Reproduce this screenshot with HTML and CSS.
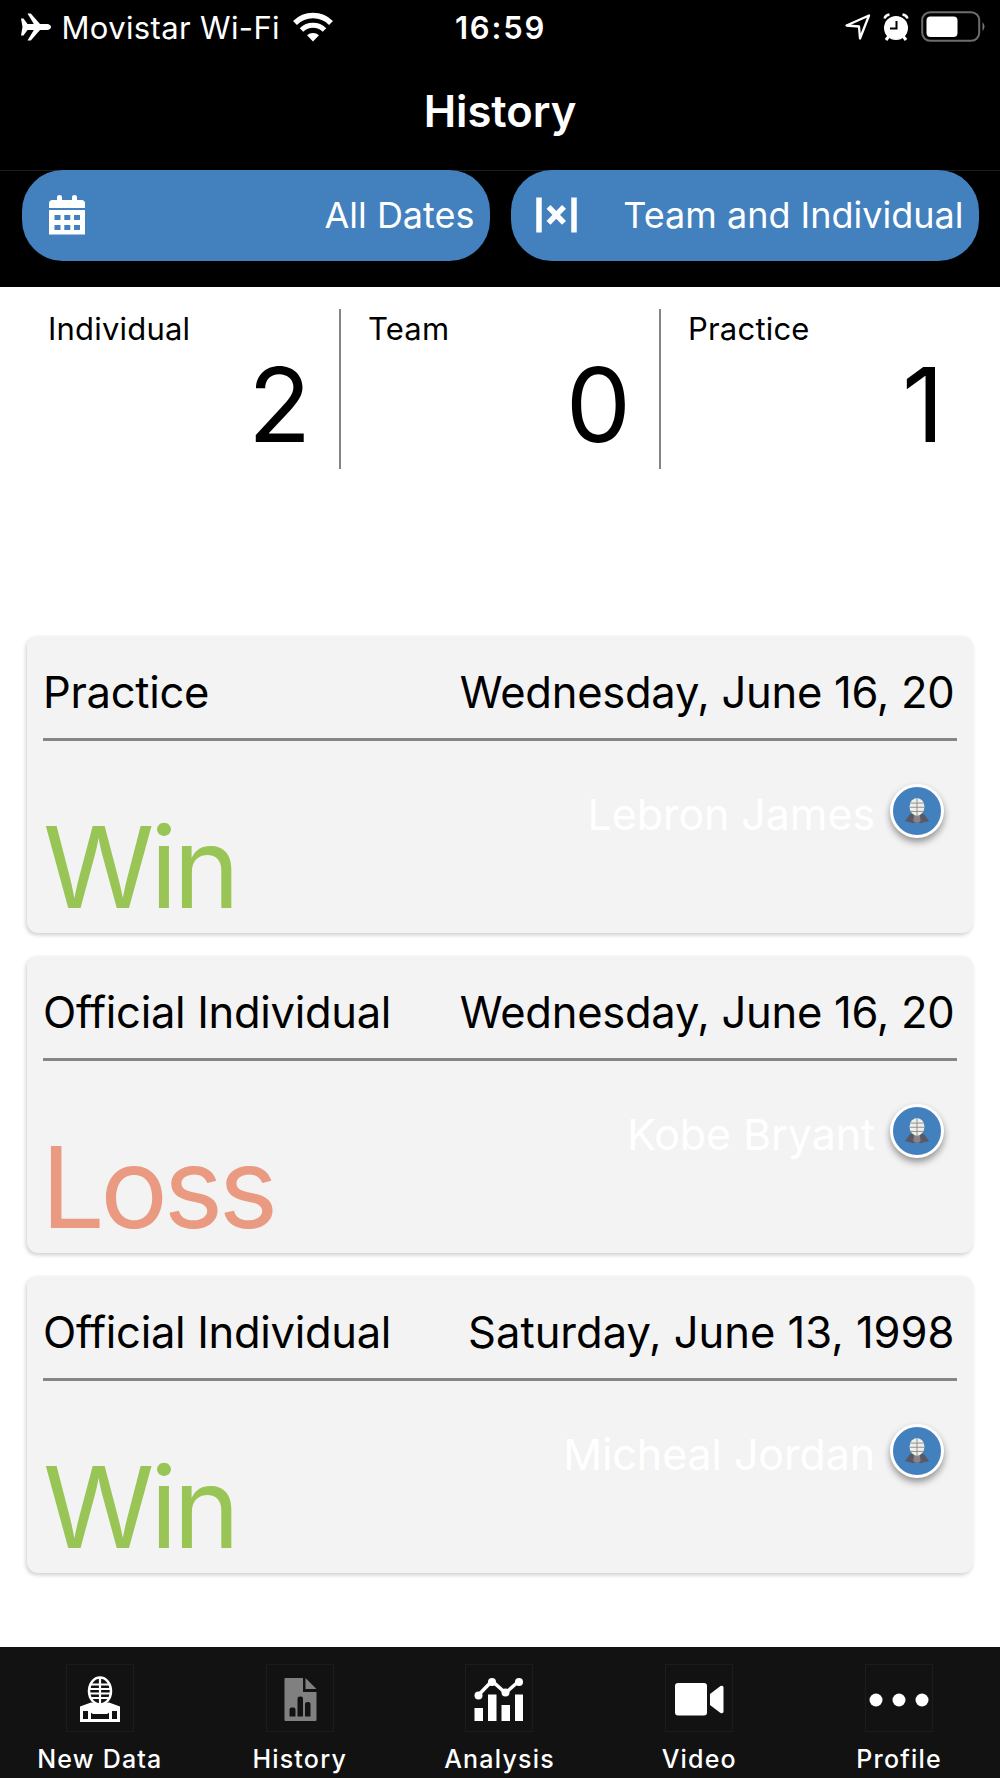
FILE: index.html
```html
<!DOCTYPE html>
<html lang="en">
<head>
<meta charset="utf-8">
<title>History</title>
<link rel="stylesheet" href="styles.css">
</head>
<body>
<svg width="0" height="0" class="defs" aria-hidden="true">
  <symbol id="fencer" viewBox="0 0 30 30">
    <path d="M7 19 11 17h8l4 2 5 7-6 1-2 1-5-1-5 1-2-1-6-1z" fill="#5b5763"/>
    <path d="M12 19h6l1 7-4 2-4-2z" fill="#8a8189"/>
    <ellipse cx="15" cy="10.500" rx="8" ry="9.500" fill="#eeeeea"/>
    <path d="M15 1v20M8 6.500h14M7 11h16M8 15.500h14" stroke="#8b8b8b" stroke-width="1" fill="none"/>
  </symbol>
</svg>
<header class="header">
  <div class="status">
    <div class="status-left">
      <svg class="plane" width="30" height="28" viewBox="0 0 30 28"><path d="M0 5.500h2.500l4 5.500h6.300L6.500.5h3.300L19 11h7.200c2 0 3.800 1.400 3.800 3s-1.800 3-3.800 3H19L9.800 27.500H6.500L12.800 17H6.500l-4 5.500H0L1.500 14z" fill="#fff"/></svg>
      <span class="carrier">Movistar Wi-Fi</span>
      <svg class="wifi" width="40" height="30" viewBox="0 0 40 30" fill="none" stroke="#fff"><path d="M2 11a25.500 25.500 0 0 1 36 0" stroke-width="5.500"/><path d="M8.500 18a16.500 16.500 0 0 1 23 0" stroke-width="5"/><path d="M20 29.500 14 23.300a8.800 8.800 0 0 1 12 0z" fill="#fff" stroke="none"/></svg>
    </div>
    <span class="clock">16:59</span>
    <div class="status-right">
      <svg width="26" height="26" viewBox="0 0 26 26"><path d="M1.500 11.500 24 1.500 15 24.500 14 12.500z" fill="none" stroke="#fff" stroke-width="2.300" stroke-linejoin="round"/></svg>
      <svg class="alarm" width="26" height="28" viewBox="0 0 26 28"><circle cx="13" cy="15" r="12" fill="#fff"/><path d="m6 23-3 4M20 23l3 4" stroke="#fff" stroke-width="3"/><path d="M1.500 5.500Q2.500 2 6.500 1.500M24.500 5.500Q23.500 2 19.500 1.500" stroke="#fff" stroke-width="2.500" fill="none"/><path d="M13.500 8v7.500H7" stroke="#000" stroke-width="2" fill="none"/></svg>
      <svg class="battery" width="65" height="32" viewBox="0 0 65 32"><rect x="1.200" y="1.200" width="57" height="28.600" rx="8" fill="none" stroke="#6d6d6d" stroke-width="2"/><rect x="5.500" y="5.500" width="31" height="20.500" rx="4" fill="#fff"/><path d="M61.500 11q4 4.500 0 9z" fill="#777"/></svg>
    </div>
  </div>
  <h1 class="title">History</h1>
  <div class="filters">
    <button class="pill">
      <svg class="cal" width="36" height="40" viewBox="0 0 36 40"><path d="M0 13V8.500Q0 5 3.500 5H8V2q0-2 2.500-2T13 2v3h10V2q0-2 2.500-2T28 2v3h4.500Q36 5 36 8.500V13zM0 15h36v24.500H0z" fill="#fff"/><path d="M5.500 20h6v5h-6zM15.300 20h6v5h-6zM25 20h6v5h-6zM5.500 30h6v5h-6zM15.300 30h6v5h-6zM25 30h6v5h-6z" fill="#4280be"/></svg>
      <span>All Dates</span>
    </button>
    <button class="pill">
      <svg class="vs" width="42" height="36" viewBox="0 0 42 36" fill="none" stroke="#fff"><path d="M3 .5v35M38 .5v35" stroke-width="5.500"/><path d="m12.500 9.800 15.500 16M28 9.800l-15.500 16" stroke-width="5.500"/></svg>
      <span>Team and Individual</span>
    </button>
  </div>
</header>
<main>
  <section class="stats">
    <div class="stat"><span class="label">Individual</span><span class="num">2</span></div>
    <div class="stat"><span class="label">Team</span><span class="num">0</span></div>
    <div class="stat"><span class="label">Practice</span><span class="num">1</span></div>
  </section>
  <section class="list">
    <article class="card">
      <div class="card-head"><span class="kind">Practice</span><span class="date">Wednesday, June 16, 20</span></div>
      <div class="card-body"><span class="result win">Win</span><div class="who"><span>Lebron James</span><i class="avatar"><svg width="28" height="28"><use href="#fencer"/></svg></i></div></div>
    </article>
    <article class="card">
      <div class="card-head"><span class="kind">Official Individual</span><span class="date">Wednesday, June 16, 20</span></div>
      <div class="card-body"><span class="result loss">Loss</span><div class="who"><span>Kobe Bryant</span><i class="avatar"><svg width="28" height="28"><use href="#fencer"/></svg></i></div></div>
    </article>
    <article class="card">
      <div class="card-head"><span class="kind">Official Individual</span><span class="date full">Saturday, June 13, 1998</span></div>
      <div class="card-body"><span class="result win">Win</span><div class="who"><span>Micheal Jordan</span><i class="avatar"><svg width="28" height="28"><use href="#fencer"/></svg></i></div></div>
    </article>
  </section>
</main>
<nav class="tabs">
  <a class="tab"><span class="ico"><svg width="66" height="66" viewBox="0 0 66 66" fill="none" stroke="#fff"><ellipse cx="33" cy="26" rx="11" ry="13.500" stroke-width="2.500"/><path d="M33 12v27M24 19.500h18M22 24h22M23 28.500h20M25 33h16" stroke-width="2.200"/><path d="m13 41.500 11-4q9 2.500 18 0l11 4v4.500h-8.500l-4.500 3H26l-4.500-3H13z" fill="#fff" stroke="none"/><path d="M14.500 43v12.500h37V43M22.500 44v11M43.500 44v11" stroke-width="3"/></svg></span><span class="name">New Data</span></a>
  <a class="tab"><span class="ico"><svg width="66" height="66" viewBox="0 0 66 66"><path d="M18.500 13H36v14h13.500v28q0 1-1 1h-30q-1 0-1-1V14q0-1 1-1zM38.500 13l11 11h-11z" fill="#808080"/><path d="M24.500 42.500h2q2 0 2 2v7h-6v-7q0-2 2-2zM33 31.500h1q2 0 2 2v18h-5.500v-18q0-2 2.500-2zM40.500 37h1q2 0 2 2v12.500H38V39q0-2 2.500-2z" fill="#121212"/></svg></span><span class="name">History</span></a>
  <a class="tab"><span class="ico"><svg width="66" height="66" viewBox="0 0 66 66" fill="#fff"><path d="M8.500 43h8.500v13H8.500zM22 29.500h8.500V56H22zM35.500 40H44v16h-8.500zM49 29.500h8V56h-8z"/><path d="m12.500 30 13.500-14 13.500 12L53 16" fill="none" stroke="#fff" stroke-width="3.500"/><circle cx="12.500" cy="30.500" r="4"/><circle cx="26" cy="17" r="4"/><circle cx="39.500" cy="27.500" r="4"/><circle cx="53" cy="17" r="4"/></svg></span><span class="name">Analysis</span></a>
  <a class="tab"><span class="ico"><svg width="66" height="66" viewBox="0 0 66 66" fill="#fff"><rect x="9" y="18" width="32" height="32.500" rx="3"/><path d="M44 29 54.500 21q3-1 3 1.500v24q0 2.500-3 1.500L44 40z"/></svg></span><span class="name">Video</span></a>
  <a class="tab"><span class="ico"><svg width="66" height="66" viewBox="0 0 66 66" fill="#fff"><circle cx="10" cy="35" r="6.500"/><circle cx="33" cy="35" r="6.500"/><circle cx="56" cy="35" r="6.500"/></svg></span><span class="name">Profile</span></a>
</nav>
</body>
</html>
```
FILE: styles.css
```css
* { box-sizing: border-box; }
body { margin: 0; width: 1000px; height: 1778px; display: flex; flex-direction: column; background: #fff; color: #000; font-family: Inter, "Liberation Sans", sans-serif; overflow: hidden; }
.defs { position: absolute; }
.header { height: 287px; background: #000; color: #fff; }
.status { height: 54px; display: grid; grid-template-columns: 1fr auto 1fr; align-items: center; padding: 0 14px; font-size: 31px; }
.status-left, .status-right { display: flex; align-items: center; }
.status-left { padding-left: 7px; }
.status-right { justify-content: flex-end; }
.carrier { margin-left: 10.500px; letter-spacing: .35px; }
.wifi { margin-left: 13px; }
.clock { font-weight: 600; letter-spacing: 1.800px; padding-left: 1px; }
.alarm { margin: 0 12px 0 12px; }
.title { margin: 0; height: 117px; line-height: 115px; border-bottom: 1px solid #1c1c1c; font-size: 43.500px; font-weight: 600; text-align: center; }
.filters { display: grid; grid-template-columns: 1fr 1fr; gap: 21px; padding: 0 21.500px; margin-top: -1px; }
.pill { height: 91px; border: 0; border-radius: 41px; background: #4280be; color: #fff; font: 36px Inter, sans-serif; display: flex; align-items: center; justify-content: space-between; padding: 0 15px 2px 27.400px; }
.vs { margin-left: -1.500px; }
.stats { height: 348.500px; display: grid; grid-template-columns: 341px 320px 339px; padding-top: 22px; }
.stat { height: 160px; border-right: 2px solid #858585; padding: 0 28px 0 27px; display: flex; flex-direction: column; }
.stat:first-child { padding-left: 48px; }
.stat:last-child { border: 0; padding-right: 56px; }
.label { font-size: 31px; line-height: 40px; letter-spacing: .2px; }
.num { font-size: 103.500px; line-height: 112px; text-align: right; }
.list { display: flex; flex-direction: column; gap: 23px; padding: 0 27px; }
.card { height: 297px; background: #f3f3f3; border-radius: 11px; box-shadow: -1px 2px 4px rgba(0,0,0,.2); padding: 0 16px; }
.card-head { height: 105px; border-bottom: 3px solid #858585; display: flex; justify-content: space-between; font-size: 43.500px; line-height: 113px; }
.kind { letter-spacing: -.3px; }
.date { letter-spacing: -.25px; padding-right: 2.500px; }
.date.full { letter-spacing: 0; }
.card-body { display: flex; justify-content: space-between; }
.result { font-size: 113px; line-height: 120px; padding-top: 66px; letter-spacing: -4.200px; }
.win { color: #98c556; }
.loss { color: #ea9a80; margin-left: -2px; letter-spacing: -4.600px; }
.who { display: flex; align-items: center; gap: 15px; height: 141px; margin-right: 13px; color: #fff; font-size: 43px; letter-spacing: -.1px; }
.who span { padding-top: 6px; }
.avatar { width: 54px; height: 54px; border: 3px solid #fff; border-radius: 50%; background: #4280be; box-shadow: 0 4px 7px rgba(0,0,0,.4); display: flex; align-items: center; justify-content: center; }
.tabs { margin-top: auto; height: 131px; padding-right: 1px; background: #121212; color: #fff; display: grid; grid-template-columns: repeat(5, 1fr); font-size: 25px; font-weight: 500; }
.tab { display: flex; flex-direction: column; align-items: center; padding-top: 18px; }
.ico { width: 66px; height: 66px; outline: 1px solid #1c1c1c; }
.name { line-height: 30px; margin-top: 12.500px; letter-spacing: 1.200px; }
```
